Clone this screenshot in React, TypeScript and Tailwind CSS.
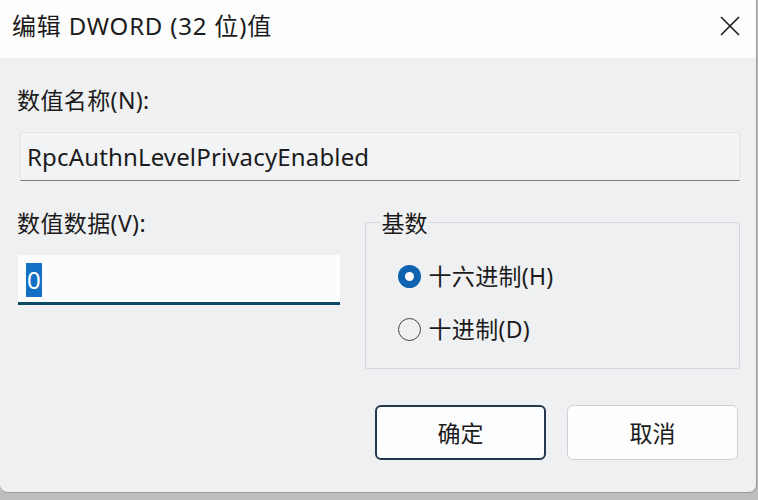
import React from "react";

const font = { fontFamily: '"Noto Sans", "Noto Sans CJK SC", sans-serif' };

export default function App() {
  return (
    <div className="w-[758px] h-[500px] bg-[#bdbdbd] overflow-hidden" style={font}>
      <div className="w-[757px] h-[493px] bg-[#eff0f2] rounded-b-[8px] border-r border-b border-[#9a9a9a] flex flex-col text-[#1b1b1b]">
        {/* Title bar */}
        <div className="h-[58px] bg-[#fdfdfd] flex items-center justify-between pl-[12px] pr-[15px] shrink-0">
          <span className="text-[24px] leading-[28px] mt-[-6px] tracking-[0.8px]">编辑 DWORD (32 位)值</span>
          <svg width="22" height="22" viewBox="0 0 22 22" className="mt-[-6px]">
            <path d="M2 2 L20 20 M20 2 L2 20" stroke="#1b1b1b" strokeWidth="1.6" fill="none" />
          </svg>
        </div>
        {/* Body */}
        <div className="flex flex-col pl-[17px] pr-[16px] pt-[28px]">
          <div className="text-[23px] leading-[28px] tracking-[0.4px]">数值名称(N):</div>
          <div className="mt-[18px] ml-[3px] h-[49px] bg-[#f2f3f5] border border-[#e3e4e6] border-b-[#7a7a7a] flex items-center pl-[6px]">
            <span className="text-[24px] leading-[28px] tracking-[0.15px]">RpcAuthnLevelPrivacyEnabled</span>
          </div>
          <div className="flex mt-[28px]">
            <div className="w-[323px] flex flex-col">
              <div className="text-[23px] leading-[28px] tracking-[0.4px]">数值数据(V):</div>
              <div className="mt-[18px] ml-[1px] h-[50px] bg-[#fbfcfd] border-b-[3px] border-[#0b4a66] flex items-center pl-[8px]">
                <span className="bg-[#1470c4] text-white text-[24px] leading-[34px] px-[1px] mt-[2px]">0</span>
              </div>
            </div>
            <div className="ml-[25px] w-[376px] relative mt-[13px] h-[147px] border border-[#d6d8db] rounded-[2px]">
              <span className="absolute left-[14px] top-[-14px] bg-[#eff0f2] px-[2px] text-[23px] leading-[28px]">基数</span>
              <div className="flex flex-col pl-[32px] pt-[41px] gap-[29px]">
                <div className="flex items-center gap-[8px]">
                  <span className="w-[23px] h-[23px] rounded-full bg-[#0f62b0] flex items-center justify-center">
                    <span className="w-[9px] h-[9px] rounded-full bg-white" />
                  </span>
                  <span className="text-[23px] leading-[24px] tracking-[0.3px]">十六进制(H)</span>
                </div>
                <div className="flex items-center gap-[8px]">
                  <span className="w-[23px] h-[23px] rounded-full border-[1.5px] border-[#444]" />
                  <span className="text-[23px] leading-[24px] tracking-[0.3px]">十进制(D)</span>
                </div>
              </div>
            </div>
          </div>
          <div className="flex justify-end gap-[21px] mt-[36px] pr-[2px]">
            <button className="w-[171px] h-[55px] rounded-[6px] border-2 border-[#26384d] bg-[#fbfdfe] text-[23px] leading-[28px]">确定</button>
            <button className="w-[171px] h-[55px] rounded-[6px] border border-[#cfd1d4] bg-[#fdfdfd] text-[23px] leading-[28px]">取消</button>
          </div>
        </div>
      </div>
    </div>
  );
}
